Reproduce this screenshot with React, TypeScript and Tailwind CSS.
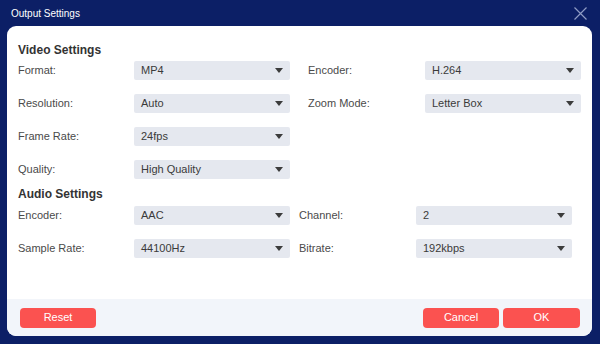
import React from "react";

type Field = { label: string; value: string };

const font = { fontFamily: "'Liberation Sans', Arial, sans-serif" };

function Caret() {
  return (
    <svg width="8" height="5" viewBox="0 0 8 5" className="shrink-0">
      <path d="M0 0h8L4 5z" fill="#3c3c3c" />
    </svg>
  );
}

function Select({ value }: { value: string }) {
  return (
    <div className="w-[156px] h-[19px] rounded-[2px] bg-[#e5e8ef] flex items-center justify-between pl-[7px] pr-[7px] text-[11px] text-[#3a3a3a]">
      <span>{value}</span>
      <Caret />
    </div>
  );
}

function Row({
  left,
  right,
  gap,
}: {
  left: Field;
  right?: Field;
  gap: string;
}) {
  return (
    <div className="flex items-center h-[19px]">
      <div className="w-[116px] text-[11px] text-[#4a4a4a]">{left.label}</div>
      <Select value={left.value} />
      {right && (
        <>
          <div className={`${gap} w-[117px] text-[11px] text-[#4a4a4a]`}>{right.label}</div>
          <Select value={right.value} />
        </>
      )}
    </div>
  );
}

export default function App() {
  return (
    <div className="w-[600px] h-[344px] bg-[#0c1f66] flex flex-col" style={font}>
      {/* title bar */}
      <div className="h-[26px] flex items-center justify-between pl-[11px] pr-[13px]">
        <span className="text-[10px] text-white">Output Settings</span>
        <svg width="13" height="13" viewBox="0 0 13 13">
          <path d="M0.5 0.5l12 12M12.5 0.5l-12 12" stroke="#8e9bc4" strokeWidth="1.2" />
        </svg>
      </div>

      <div className="mx-[7px] w-[585px] h-[310px] bg-white rounded-[9px] overflow-hidden flex flex-col">
        <div className="flex-1 pl-[11px]">
          <div className="pt-[15px] h-[35px] text-[12px] font-bold text-[#333]">Video Settings</div>
          <div className="flex flex-col gap-[14px]">
            <Row gap="ml-[18px]" left={{ label: "Format:", value: "MP4" }} right={{ label: "Encoder:", value: "H.264" }} />
            <Row gap="ml-[18px]" left={{ label: "Resolution:", value: "Auto" }} right={{ label: "Zoom Mode:", value: "Letter Box" }} />
            <Row gap="ml-[18px]" left={{ label: "Frame Rate:", value: "24fps" }} />
            <Row gap="ml-[18px]" left={{ label: "Quality:", value: "High Quality" }} />
          </div>
          <div className="h-[27px] pt-[2px] flex items-center text-[12px] font-bold text-[#333]">Audio Settings</div>
          <div className="flex flex-col gap-[14px]">
            <Row gap="ml-[9px]" left={{ label: "Encoder:", value: "AAC" }} right={{ label: "Channel:", value: "2" }} />
            <Row gap="ml-[9px]" left={{ label: "Sample Rate:", value: "44100Hz" }} right={{ label: "Bitrate:", value: "192kbps" }} />
          </div>
        </div>

        <div className="h-[37px] bg-[#f2f5fa] flex items-center justify-between pl-[13px] pr-[12px]">
          <button className="w-[76px] h-[20px] rounded-[4px] bg-[#fb5250] text-white text-[11px]">Reset</button>
          <div className="flex gap-[4px]">
            <button className="w-[76px] h-[20px] rounded-[4px] bg-[#fb5250] text-white text-[11px]">Cancel</button>
            <button className="w-[77px] h-[20px] rounded-[4px] bg-[#fb5250] text-white text-[11px]">OK</button>
          </div>
        </div>
      </div>
    </div>
  );
}
